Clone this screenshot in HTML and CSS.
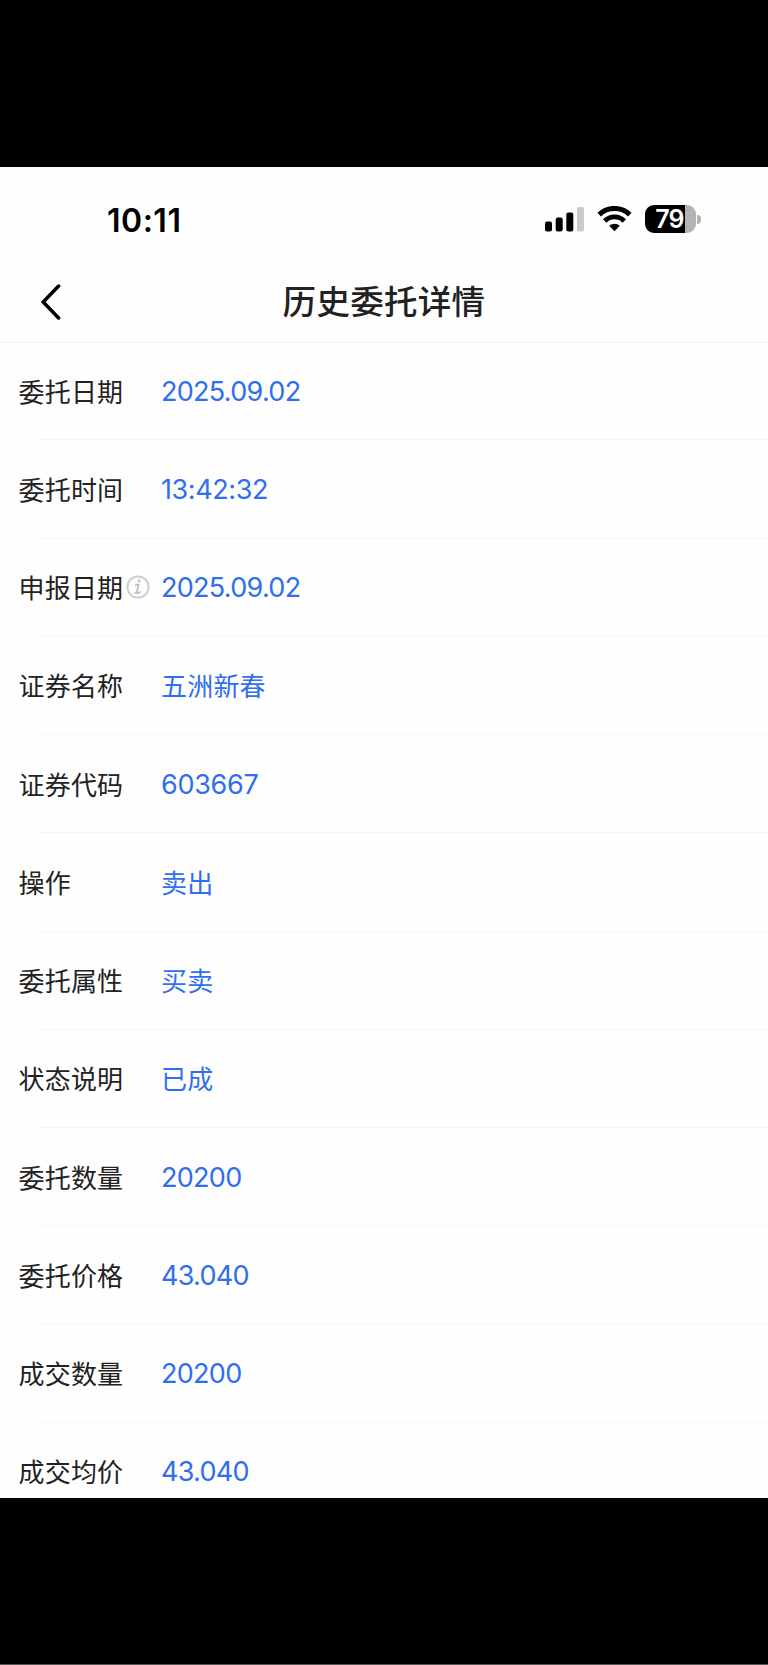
FILE: index.html
```
<!DOCTYPE html>
<html lang="zh-CN">
<head>
  <meta charset="UTF-8" />
  <meta name="viewport" content="width=device-width, initial-scale=1.0"/>
  <title>历史委托详情</title>
  <link rel="stylesheet" href="styles.css">
</head>
<body>
  <div class="screen">
    <div class="status-bar">
      <span class="time">10:11</span>
      <div class="status-icons">
        <svg class="signal" width="40" height="25" viewBox="0 0 40 25">
          <rect x="0" y="14.5" width="7" height="10" rx="2"/>
          <rect x="10.7" y="10.5" width="7" height="14" rx="2"/>
          <rect x="21.3" y="5.5" width="7" height="19" rx="2"/>
          <rect x="32" y="0" width="7" height="24.5" rx="2" fill="#cbcbcb"/>
        </svg>
        <svg class="wifi" width="35" height="26" viewBox="0 0 35 26">
          <path d="M2.2 8.6 A22 22 0 0 1 32.8 8.6" fill="none" stroke="#000" stroke-width="5"/>
          <path d="M7.7 15 A13.8 13.8 0 0 1 27.3 15" fill="none" stroke="#000" stroke-width="4.8"/>
          <path d="M12.2 19.8 A7.8 7.8 0 0 1 22.8 19.8 L17.5 25.2 Z"/>
        </svg>
        <div class="battery">
          <div class="battery-body"><span>79</span></div>
          <div class="battery-cap"></div>
        </div>
      </div>
    </div>

    <div class="header">
      <svg class="back" width="20" height="36" viewBox="0 0 20 36">
        <path d="M17.6 2 L2.2 18 L17.6 34" fill="none" stroke="#000" stroke-width="3.5" stroke-linecap="round" stroke-linejoin="miter"/>
      </svg>
      <h1>历史委托详情</h1>
    </div>

    <div class="list">
      <div class="row"><span class="label">委托日期</span><span class="value">2025.09.02</span></div>
      <div class="row"><span class="label">委托时间</span><span class="value time-value">13:42:32</span></div>
      <div class="row">
        <span class="label">申报日期<svg class="info" width="24" height="24" viewBox="0 0 24 24">
          <circle cx="12" cy="12" r="10.6" fill="none" stroke="#cfcfcf" stroke-width="2"/>
          <circle cx="13.2" cy="5.8" r="1.6" fill="#c4c4c4"/>
          <path d="M9 9.8 H12.6 L10.9 16.6 Q10.6 18.4 14.4 17.2 M8.4 18 H12" fill="none" stroke="#c4c4c4" stroke-width="2"/>
        </svg></span><span class="value">2025.09.02</span>
      </div>
      <div class="row"><span class="label">证券名称</span><span class="value cn">五洲新春</span></div>
      <div class="row"><span class="label">证券代码</span><span class="value code">603667</span></div>
      <div class="row"><span class="label">操作</span><span class="value cn">卖出</span></div>
      <div class="row"><span class="label">委托属性</span><span class="value cn">买卖</span></div>
      <div class="row"><span class="label">状态说明</span><span class="value cn">已成</span></div>
      <div class="row"><span class="label">委托数量</span><span class="value">20200</span></div>
      <div class="row"><span class="label">委托价格</span><span class="value">43.040</span></div>
      <div class="row"><span class="label">成交数量</span><span class="value">20200</span></div>
      <div class="row"><span class="label">成交均价</span><span class="value">43.040</span></div>
    </div>
  </div>
</body>
</html>
```
FILE: styles.css
```
* {
  margin: 0;
  padding: 0;
  box-sizing: border-box;
}

body {
  height: 1665px;
  padding-top: 167px;
  background: #000;
  border-bottom: 1px solid #555;
  font-family: Inter, "Noto Sans CJK SC", sans-serif;
  overflow: hidden;
}

.screen {
  height: 1331px;
  background: #fefefe;
  overflow: hidden;
}

.status-bar {
  display: flex;
  justify-content: space-between;
  height: 88px;
  padding: 34px 67px 0 107px;
}

.time {
  font-size: 32px;
  line-height: 39px;
  font-weight: 600;
  letter-spacing: 0.5px;
  color: #000;
}

.status-icons {
  display: flex;
  align-items: flex-start;
  padding-top: 4px;
}

.signal {
  margin-top: 2px;
  margin-right: 12px;
}

.wifi {
  margin-top: 1px;
  margin-right: 13px;
}

.battery {
  display: flex;
  align-items: center;
  gap: 1px;
}

.battery-body {
  width: 51px;
  height: 28px;
  padding-right: 2px;
  border-radius: 9px;
  background: linear-gradient(to right, #000 40px, #b3b3b3 40px);
  color: #fff;
  font-size: 25px;
  font-weight: 600;
  line-height: 29px;
  text-align: center;
  letter-spacing: -0.8px;
}

.battery-cap {
  width: 4px;
  height: 9px;
  border-radius: 0 4px 4px 0;
  background: #b3b3b3;
}

.header {
  display: grid;
  grid-template-columns: 80px 1fr 80px;
  align-items: center;
  height: 88px;
  padding-top: 6px;
  border-bottom: 1px solid #f3f3f3;
}

.back {
  margin-left: 41px;
}

.header h1 {
  font-size: 33.5px;
  font-weight: 500;
  line-height: 48px;
  letter-spacing: 0.3px;
  text-align: center;
  color: #222;
}

.list {
  margin-top: -1px;
}

.row {
  display: flex;
  align-items: center;
  height: 98.25px;
  padding-left: 18.5px;
  /* divider starts 36px in */
  background: linear-gradient(#f5f5f5, #f5f5f5) 36px 100% / 100% 1px no-repeat;
}

.label {
  display: flex;
  align-items: center;
  width: 142.5px;
  padding-bottom: 2px;
  font-size: 26px;
  letter-spacing: 0.2px;
  white-space: nowrap;
  color: #222;
}

.info {
  margin-top: 1px;
  margin-left: 3px;
}

.value {
  font-size: 27px;
  letter-spacing: -0.7px;
  color: #2f6fed;
}

.value.time-value {
  letter-spacing: -0.4px;
}

.value.code {
  letter-spacing: -0.3px;
}

.value.cn {
  padding-bottom: 2px;
  font-size: 26px;
  letter-spacing: 0.2px;
}
```
